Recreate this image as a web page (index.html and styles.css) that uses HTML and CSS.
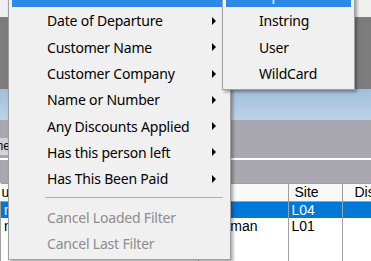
FILE: index.html
```html
<!DOCTYPE html>
<html>
<head>
  <title>Filter</title>
  <link rel="stylesheet" href="styles.css">
</head>
<body>
  <div class="window">
    <div class="toolbar"></div>
    <div class="panel-dark"></div>
    <div class="band"></div>
    <div class="panel-grey">
      <div class="label">Name</div>
      <div class="rule"></div>
    </div>
    <table class="grid">
      <thead>
        <tr>
          <th class="col-a">user</th>
          <th class="col-b">No</th>
          <th class="col-site">Site</th>
          <th class="col-dis">Discount</th>
        </tr>
      </thead>
      <tbody>
        <tr class="selected">
          <td>mark</td>
          <td></td>
          <td>L04</td>
          <td></td>
        </tr>
        <tr>
          <td>nathan</td>
          <td>Foreman</td>
          <td>L01</td>
          <td></td>
        </tr>
        <tr class="empty">
          <td></td><td></td><td></td><td></td>
        </tr>
      </tbody>
    </table>
  </div>

  <!-- filter context menu -->
  <div class="menu main-menu">
    <div class="item active">Arrival Date<span class="arrow"></span></div>
    <div class="item">Date of Departure<span class="arrow"></span></div>
    <div class="item">Customer Name<span class="arrow"></span></div>
    <div class="item">Customer Company<span class="arrow"></span></div>
    <div class="item">Name or Number<span class="arrow"></span></div>
    <div class="item">Any Discounts Applied<span class="arrow"></span></div>
    <div class="item">Has this person left<span class="arrow"></span></div>
    <div class="item">Has This Been Paid<span class="arrow"></span></div>
    <div class="separator"></div>
    <div class="item disabled">Cancel Loaded Filter</div>
    <div class="item disabled">Cancel Last Filter</div>
  </div>

  <div class="menu sub-menu">
    <div class="item active">Equals</div>
    <div class="item">Instring</div>
    <div class="item">User</div>
    <div class="item">WildCard</div>
  </div>
</body>
</html>
```

FILE: styles.css
```css
body {
  margin: 0;
  font-family: "Liberation Sans", Arial, sans-serif;
  font-size: 14px;
  overflow: hidden;
}

.window {
  width: 371px;
  height: 261px;
  background-color: #ffffff;
  overflow: hidden;
}

.toolbar {
  height: 17px;
  background-color: #f0f0f0;
}

.panel-dark {
  height: 72px;
  background-color: #7d7d7d;
}

.band {
  height: 31px;
  background: linear-gradient(#a2bedc, #bcd2e8);
}

.panel-grey {
  height: 63px;
  background-color: #a9a8b0;
  display: flex;
  flex-direction: column;
}

.label {
  margin-top: 18px;
  margin-left: -50px;
  width: 60px;
  height: 17px;
  line-height: 17px;
  font-size: 12px;
  text-align: right;
  background-color: #d4d4d8;
  color: #000;
}

.rule {
  margin-top: 3px;
  height: 2px;
  background-color: #ffffff;
}

.grid {
  border-collapse: collapse;
  table-layout: fixed;
  width: 418px;
  background-color: #ffffff;
}

.grid th,
.grid td {
  padding: 0 0 0 3px;
  text-align: left;
  font-weight: normal;
  white-space: nowrap;
  overflow: hidden;
  border-left: 1px solid #a0a0a0;
}

.grid th {
  height: 17px;
  line-height: 17px;
  background-color: #f8f8f8;
  border-top: 1px solid #a0a0a0;
  border-bottom: 1px solid #a0a0a0;
}

.grid td {
  height: 16px;
  line-height: 16px;
}

.grid .col-a {
  width: 196px;
  padding-left: 1px;
  border-left: none;
}

.grid .col-b {
  width: 86px;
}

.grid .col-site {
  width: 47px;
  padding-left: 6px;
}

.grid .col-dis {
  width: 64px;
  padding-left: 12px;
}

.grid tr.selected td {
  background-color: #0078d7;
  color: #ffffff;
}

.grid tr.empty td {
  height: 40px;
}

.menu {
  position: absolute;
  box-sizing: border-box;
  top: -23px;
  padding: 3px;
  background-color: #f0f0f0;
  border: 1px solid #a0a0a0;
  box-shadow: 2px 2px 3px rgba(0, 0, 0, 0.35);
  font-family: "Noto Sans", sans-serif;
  font-size: 14px;
  letter-spacing: -0.2px;
  color: #000;
}

.main-menu {
  left: 8px;
  width: 223px;
}

.sub-menu {
  left: 222px;
  width: 133px;
}

.item {
  height: 26.3px;
  display: flex;
  align-items: center;
  padding-left: 35px;
  padding-top: 1px;
  box-sizing: border-box;
  white-space: nowrap;
}

.sub-menu .item {
  padding-left: 33px;
}

.item.active {
  background-color: #2b8ae8;
  color: #ffffff;
}

.item.disabled {
  color: #8d8d8d;
}

.arrow {
  margin-left: auto;
  margin-right: 11px;
  width: 0;
  height: 0;
  border-left: 4px solid #000;
  border-top: 4px solid transparent;
  border-bottom: 4px solid transparent;
}

.item.active .arrow {
  border-left-color: #ffffff;
}

.separator {
  height: 12px;
  display: flex;
  align-items: center;
  padding: 0 4px 0 33px;
}

.separator::before {
  content: "";
  flex: 1;
  height: 1px;
  margin-top: 1px;
  background-color: #b0b0b0;
}
```
